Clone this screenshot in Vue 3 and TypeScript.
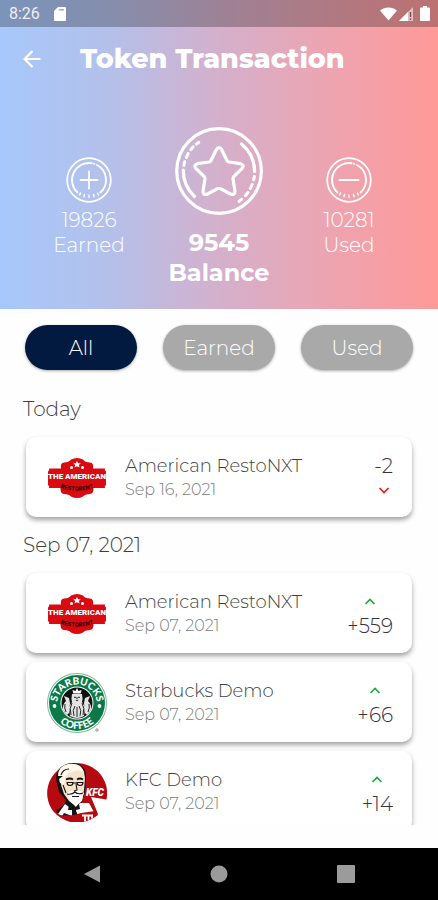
<script setup lang="ts">
import { computed, ref } from 'vue'

type Filter = 'All' | 'Earned' | 'Used'
type Brand = 'resto' | 'starbucks' | 'kfc'

interface Transaction {
  id: number
  name: string
  date: string
  amount: number
  brand: Brand
}

interface Group {
  label: string
  items: Transaction[]
}

const filters: Filter[] = ['All', 'Earned', 'Used']
const active = ref<Filter>('All')

const groups: Group[] = [
  {
    label: 'Today',
    items: [{ id: 1, name: 'American RestoNXT', date: 'Sep 16, 2021', amount: -2, brand: 'resto' }],
  },
  {
    label: 'Sep 07, 2021',
    items: [
      { id: 2, name: 'American RestoNXT', date: 'Sep 07, 2021', amount: 559, brand: 'resto' },
      { id: 3, name: 'Starbucks Demo', date: 'Sep 07, 2021', amount: 66, brand: 'starbucks' },
      { id: 4, name: 'KFC Demo', date: 'Sep 07, 2021', amount: 14, brand: 'kfc' },
    ],
  },
]

const visibleGroups = computed<Group[]>(() =>
  groups
    .map((g) => ({
      label: g.label,
      items: g.items.filter(
        (t) =>
          active.value === 'All' || (active.value === 'Earned' ? t.amount > 0 : t.amount < 0),
      ),
    }))
    .filter((g) => g.items.length > 0),
)

const format = (n: number): string => (n > 0 ? `+${n}` : `${n}`)
</script>

<template>
  <div class="screen">
    <header class="hero">
      <div class="status">
        <span class="clock">8:26</span>
        <svg class="sd" viewBox="0 0 12 14" aria-hidden="true">
          <path d="M4 0h7a1 1 0 0 1 1 1v12a1 1 0 0 1-1 1H1a1 1 0 0 1-1-1V4z" fill="#fff" />
          <path d="M5 2.800h5" stroke="#9a93ab" stroke-width="1.200" />
        </svg>
        <span class="spacer"></span>
        <svg class="wifi" viewBox="0 0 18 14" aria-hidden="true">
          <path d="M0 3.200C5-1 13-1 18 3.200L9 14z" fill="#fff" />
        </svg>
        <svg class="signal" viewBox="0 0 14 14" aria-hidden="true">
          <path d="M14 0v14H0z" fill="#fff" opacity=".55" />
          <path d="M9 5v9H0z" fill="#fff" />
          <path d="M11.500 5v5M11.500 11.500v1.500" stroke="#7a4a50" stroke-width="1.400" />
        </svg>
        <svg class="battery" viewBox="0 0 10 15" aria-hidden="true">
          <path d="M3 0h4v1.500h2a1 1 0 0 1 1 1V14a1 1 0 0 1-1 1H1a1 1 0 0 1-1-1V2.500a1 1 0 0 1 1-1h2z" fill="#fff" />
        </svg>
      </div>

      <div class="toolbar">
        <button class="back" type="button" aria-label="Back">
          <svg viewBox="0 0 18 18" aria-hidden="true">
            <path d="M17.500 9H1.500M9.500 1L1.500 9l8 8" fill="none" stroke="#fff" stroke-width="2.200" />
          </svg>
        </button>
        <h1>Token Transaction</h1>
      </div>

      <div class="stats">
        <div class="stat">
          <svg class="coin" viewBox="0 0 46 46" fill="none" stroke="#fff" stroke-linecap="round" aria-hidden="true">
            <circle cx="23" cy="23" r="21.800" stroke-width="1.700" />
            <path d="M11.500 35.500A17 17 0 0 1 25.500 6.200M31 8A17 17 0 0 1 34.500 35.500" stroke-width="1.900" />
            <path d="M27.500 6.600l1 .3" stroke-width="1.600" />
            <path d="M14.500 36l-.8 2M18.500 37.500l-.6 2.200M23 38.200v2.200M27.500 37.500l.6 2.200M31.500 36l.8 2" stroke-width="1.400" />
            <path d="M14.500 23h17M23 14.500v17" stroke-width="1.800" />
          </svg>
          <span>19826</span>
          <span>Earned</span>
        </div>
        <div class="stat main">
          <svg class="coin" viewBox="0 0 88 88" fill="none" stroke="#fff" stroke-linecap="round" stroke-linejoin="round" aria-hidden="true">
            <circle cx="44" cy="44" r="42.300" stroke-width="3.200" />
            <path d="M19.500 69.500A36 36 0 0 1 8.300 43" stroke-width="3.200" />
            <path d="M66.500 17A36 36 0 0 1 79.600 44.500" stroke-width="3.200" />
            <path d="M8.900 38.500l.8-3.800M11.300 30.500l1.900-3.900M15.800 22.700l2.400-2.900M21.300 17.200l2.500-1.900" stroke-width="3" />
            <path d="M79.300 49.500l-.7 3.400M77.200 57.500l-1.800 4M73 65.500l-2.600 3.200M66.500 72.300l-2.500 2" stroke-width="3" />
            <path d="M41.300 22.800Q44 18.500 46.700 22.800L52 33.500Q52.600 34.700 54 35L65.500 36.700Q70 38 67.200 41.300L58.700 49.700Q57.800 50.700 58 52L60 64Q60 68.600 55.500 67L45.300 61.600Q44 61 42.700 61.600L32.500 67Q28 68.600 28 64L30 52Q30.200 50.700 29.300 49.700L20.800 41.300Q18 38 22.500 36.700L34 35Q35.400 34.700 36 33.500Z" stroke-width="3.200" />
          </svg>
          <span>9545</span>
          <span>Balance</span>
        </div>
        <div class="stat">
          <svg class="coin" viewBox="0 0 46 46" fill="none" stroke="#fff" stroke-linecap="round" aria-hidden="true">
            <circle cx="23" cy="23" r="21.800" stroke-width="1.700" />
            <path d="M11.500 35.500A17 17 0 0 1 25.500 6.200M31 8A17 17 0 0 1 34.500 35.500" stroke-width="1.900" />
            <path d="M27.500 6.600l1 .3" stroke-width="1.600" />
            <path d="M14.500 36l-.8 2M18.500 37.500l-.6 2.200M23 38.200v2.200M27.500 37.500l.6 2.200M31.500 36l.8 2" stroke-width="1.400" />
            <path d="M13.500 23h19" stroke-width="2" />
          </svg>
          <span>10281</span>
          <span>Used</span>
        </div>
      </div>
    </header>

    <nav class="filters" aria-label="Transaction type">
      <button
        v-for="f in filters"
        :key="f"
        type="button"
        class="pill"
        :class="{ on: f === active }"
        :aria-pressed="f === active"
        @click="active = f"
      >
        {{ f }}
      </button>
    </nav>

    <main class="list">
      <template v-for="g in visibleGroups" :key="g.label">
        <h2>{{ g.label }}</h2>
        <article v-for="t in g.items" :key="t.id" class="card">
          <svg v-if="t.brand === 'resto'" class="logo" viewBox="0 0 60 60" aria-hidden="true">
            <path d="M2 20.500H14Q13 15 17 14.500 22 14.500 24 11.500 30 8.500 36 11.500 38 14.500 43 14.500 47 15 46 20.500H58Q57 22 59 23.500V37Q57 38.500 58 40H46.500Q47 45.500 43 46 38 46 36 48.500 30 51.500 24 48.500 22 46 17 46 13 45.500 13.500 40H2Q3 38.500 1 37V23.500Q3 22 2 20.500Z" fill="#d90a10" />
            <g fill="#fff">
              <path d="M30 13l1.200 2.300h2.600l-2 1.700.7 2.600-2.500-1.400-2.500 1.400.7-2.600-2-1.700h2.600z" />
              <circle cx="24.500" cy="19.500" r="1.500" />
              <circle cx="35.500" cy="19.500" r="1.500" />
            </g>
            <text class="resto-name" x="30" y="31" text-anchor="middle">THE AMERICAN</text>
            <path :id="`resto-arc-${t.id}`" d="M12 39.500Q30 46 48 39.500" fill="none" />
            <text class="resto-sub">
              <textPath :href="`#resto-arc-${t.id}`" startOffset="50%" text-anchor="middle">RESTORENT</textPath>
            </text>
          </svg>

          <svg v-else-if="t.brand === 'starbucks'" class="logo" viewBox="0 0 60 60" aria-hidden="true">
            <circle cx="30" cy="30" r="30" fill="#7fb89b" />
            <circle cx="30" cy="30" r="29" fill="#fff" />
            <circle cx="30" cy="30" r="28" fill="#0b7a48" />
            <circle cx="30" cy="30" r="16.500" fill="#fff" />
            <circle cx="30" cy="30" r="15.500" fill="#111" />
            <path d="M16 37q-1-5 3-9l-2-5 5 2 1 5-1 10-2 2zM44 37q1-5-3-9l2-5-5 2-1 5 1 10 2 2z" fill="#e4e4e4" />
            <path d="M30 15l1.500 3 3-1-.8 3.500h-7.400L25.500 17l3 1z" fill="#fff" />
            <path d="M25 21h10q1 5 0 8l3 5-1 9q-7 4-14 0l-1-9 3-5q-1-3 0-8z" fill="#e4e4e4" />
            <path d="M27 24.300h2M31 24.300h2M28.800 27.300h2.400M30 24v2M25 30q-3 5-1 12M35 30q3 5 1 12M28 33q-3 4-1 10M32 33q3 4 1 10M30 34v10M18 31q-1 4 1 8M42 31q1 4-1 8" fill="none" stroke="#222" stroke-width="1" />
            <circle cx="7.500" cy="33" r="1.900" fill="#fff" />
            <circle cx="52.500" cy="33" r="1.900" fill="#fff" />
            <path id="sb-top" d="M10.500 36A20 20 0 1 1 49.500 36" fill="none" />
            <path id="sb-bottom" d="M4 30A26 26 0 0 0 56 30" fill="none" />
            <text class="sb-text">
              <textPath href="#sb-top" startOffset="50%" text-anchor="middle">STARBUCKS</textPath>
            </text>
            <text class="sb-text">
              <textPath href="#sb-bottom" startOffset="50%" text-anchor="middle">COFFEE</textPath>
            </text>
            <circle cx="50" cy="57" r="1.200" fill="none" stroke="#555" stroke-width=".6" />
          </svg>

          <svg v-else class="logo" viewBox="0 0 60 60" aria-hidden="true">
            <path d="M6 49A30 30 0 1 1 59.500 37.500L44 35l7 17A30 30 0 0 1 10 53z" fill="#b50a10" />
            <path d="M11 25Q6 12 14 5 22-1 32 2 39 6 39 14L38 30 34 42 44 44 48 51 44 55 12 53 9 49 17 43 19 38 12 30z" fill="#161314" />
            <path d="M14 13Q14 4 23 3 34 1 37 10L38 16 37 28 35 39 29 44 22 39 17 32 14 23 17 15z" fill="#f6e4ca" />
            <path d="M11 14Q11 4 21 2 34 0 37 10 30 7 25 10 20 10 18 16L17 23 13 21 12 17 16 14z" fill="#fff8ec" />
            <path d="M20 31q5-4 8-1 5-3 9 1l-2 7-6 7-6-6z" fill="#fff" />
            <path d="M19 17.500q4-2 7 0M30 17.500q3-2 6 0" fill="none" stroke="#161314" stroke-width="1.800" />
            <path d="M20 20.500h6q0 3-3 3t-3-3zM30 20.500h6q0 3-3 3t-3-3zM26 21h4M29 22l1 6-3 1M20 32q5 1 8-2 3 3 8 1M25 34.500h7M16 23l3 8M14 13q2-6 8-6" fill="none" stroke="#161314" stroke-width="1.100" />
            <path d="M18 42l8 6-1 6-8-3-2 3-4-2zM33 41l-5 7 3 5 13 0 3-3-5-9z" fill="#fff" />
            <path d="M22 43l5 4 5-5 1 5-4 1 1 6-3-4-2 4 0-6-4 0z" fill="#161314" />
            <path d="M9 52q12 4 25-1l14-2 3 4Q34 66 15 56z" fill="#b50a10" />
            <path d="M35 53.500h11M38 53.500v6M41.500 53.500v5M45 53.500v3" stroke="#fff" stroke-width="1.800" />
            <text class="kfc-text" x="39" y="34">KFC</text>
          </svg>

          <div class="info">
            <h3>{{ t.name }}</h3>
            <p>{{ t.date }}</p>
          </div>

          <div class="amount" :class="{ gain: t.amount > 0 }">
            <span>{{ format(t.amount) }}</span>
            <svg viewBox="0 0 12 24" aria-hidden="true">
              <path d="M1.500 10L6 14.500l4.500-4.500" fill="none" stroke="currentColor" stroke-width="1.700" />
            </svg>
          </div>
        </article>
      </template>
    </main>

    <footer class="system">
      <button type="button" aria-label="System back">
        <svg viewBox="0 0 18 18" aria-hidden="true"><path d="M1 9L17 .5v17z" fill="#9b9b9b" /></svg>
      </button>
      <button type="button" aria-label="Home">
        <svg viewBox="0 0 18 18" aria-hidden="true"><circle cx="9" cy="9" r="8.500" fill="#9b9b9b" /></svg>
      </button>
      <button type="button" aria-label="Recent apps">
        <svg viewBox="0 0 18 18" aria-hidden="true"><rect width="18" height="18" rx="1" fill="#9b9b9b" /></svg>
      </button>
    </footer>
  </div>
</template>

<style>
body {
  margin: 0;
}
</style>

<style scoped>
.screen {
  display: flex;
  flex-direction: column;
  height: 100vh;
  overflow: hidden;
  background: #fefefe;
  color: #3f3f42;
  font-family: Montserrat, Inter, "Liberation Sans", sans-serif;
}

button {
  padding: 0;
  border: 0;
  background: none;
  font: inherit;
  cursor: pointer;
}

svg {
  display: block;
  flex: none;
}

h1,
h2,
h3,
p {
  margin: 0;
}

.hero {
  flex: none;
  padding-bottom: 21px;
  background: linear-gradient(90deg, #a6c8fb 0%, #b4c0ea 25%, #d4b0cb 50%, #eda4b1 75%, #ff9998 100%);
  color: #fff;
}

.status {
  display: flex;
  align-items: center;
  height: 27px;
  padding: 0 8px 0 9px;
  background: rgba(0, 0, 0, 0.26);
}

.clock {
  font: 16px/27px Roboto, sans-serif;
  color: #f0eef2;
}

.sd {
  width: 12px;
  height: 14px;
  margin-left: 14px;
}

.spacer {
  flex: 1;
}

.wifi {
  width: 17px;
  height: 14px;
}

.signal {
  width: 14px;
  height: 14px;
  margin: 0 7px 0 2px;
}

.battery {
  width: 10px;
  height: 15px;
}

.toolbar {
  display: flex;
  align-items: center;
  height: 64px;
  padding-left: 16px;
}

.back {
  display: flex;
  align-items: center;
  justify-content: center;
  width: 32px;
  height: 32px;
}

.back svg {
  width: 18px;
  height: 18px;
}

h1 {
  margin-left: 32px;
  font-size: 27px;
  font-weight: 800;
  line-height: 32px;
  white-space: nowrap;
}

.stats {
  display: grid;
  grid-template-columns: repeat(3, 1fr);
  align-items: start;
  padding: 36px 24px 0;
}

.stat {
  display: flex;
  flex-direction: column;
  align-items: center;
  padding-top: 30px;
  font-size: 20px;
  font-weight: 300;
  line-height: 25px;
}

.stat .coin {
  width: 46px;
  height: 46px;
  margin-bottom: 5px;
}

.stat.main {
  padding-top: 0;
  font-size: 24px;
  font-weight: 700;
  line-height: 30px;
}

.stat.main .coin {
  width: 88px;
  height: 88px;
  margin-bottom: 13px;
}

.filters {
  display: flex;
  flex: none;
  gap: 26px;
  padding: 16px 25px 20px;
}

.pill {
  flex: 1;
  height: 45px;
  border-radius: 23px;
  background: #a9a9a9;
  box-shadow: 0 1px 3px rgba(0, 0, 0, 0.35);
  color: #fff;
  font-size: 20px;
  font-weight: 300;
}

.pill.on {
  background: #031a40;
}

.list {
  display: flex;
  flex: 1;
  flex-direction: column;
  gap: 9px;
  min-height: 0;
  margin-bottom: 23px;
  overflow-y: auto;
  scrollbar-width: none;
}

h2 {
  flex: none;
  padding: 0 23px;
  font-size: 20px;
  font-weight: 300;
  line-height: 38px;
}

.card {
  display: flex;
  flex: none;
  align-items: center;
  height: 80px;
  margin: 0 26px;
  padding: 2px 19px 0 21px;
  box-sizing: border-box;
  border-radius: 10px;
  background: #fff;
  box-shadow: 0 3px 5px rgba(0, 0, 0, 0.36);
}

.logo {
  width: 60px;
  height: 60px;
}

.resto-name {
  fill: #fff;
  font: 900 8px Roboto, sans-serif;
}

.resto-sub {
  fill: #3a0508;
  font: 900 6px Roboto, sans-serif;
}

.sb-text {
  fill: #fff;
  font: 900 10px Lato, sans-serif;
}

.kfc-text {
  fill: #fff;
  font: italic 900 10px Roboto, sans-serif;
}

.info {
  flex: 1;
  min-width: 0;
  margin-left: 18px;
}

h3 {
  font-size: 18px;
  font-weight: 300;
  line-height: 24px;
  white-space: nowrap;
}

.info p {
  color: #7c7c7c;
  font-size: 16px;
  font-weight: 300;
  line-height: 24px;
}

.amount {
  display: flex;
  flex-direction: column;
  align-items: center;
  color: #e02222;
}

.amount span {
  color: #34343f;
  font-size: 20px;
  font-weight: 300;
  line-height: 24px;
}

.amount svg {
  width: 12px;
  height: 24px;
}

.amount.gain {
  flex-direction: column-reverse;
  color: #23a637;
}

.amount.gain svg {
  transform: rotate(180deg);
}

.system {
  display: flex;
  flex: none;
  align-items: center;
  justify-content: space-around;
  height: 52px;
  padding: 0 29px;
  background: #000;
}

.system button {
  padding: 8px;
}

.system svg {
  width: 18px;
  height: 18px;
}
</style>
